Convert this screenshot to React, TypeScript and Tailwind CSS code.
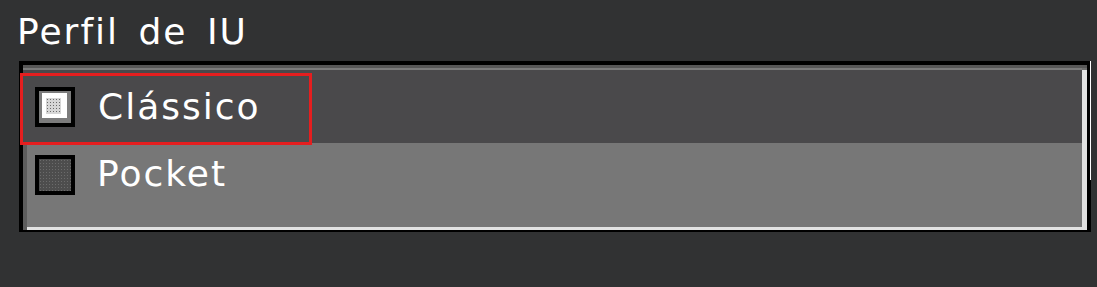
export default function App() {
  return (
    <div className="h-[287px] w-[1097px] overflow-hidden bg-[#313233] pt-[12px] font-['DejaVu_Sans',sans-serif] text-white">
      <div className="ml-[17px] text-[36px] leading-[40px] tracking-[2px] [word-spacing:6px]">
        Perfil de IU
      </div>

      {/* list box */}
      <div className="relative ml-[19px] mt-[9px] w-[1072px] border-b-2 border-l-4 border-r-4 border-t-4 border-black bg-black">
        <div className="h-[3px] bg-[#575757]" />
        <div className="flex h-[2px]">
          <div className="flex-1 bg-[#7b7b7b]" />
          <div className="w-[5px] bg-[#6e6e6e]" />
        </div>
        <div className="flex">
          <div className="flex flex-1 flex-col">
            <Row label="Clássico" checked selected />
            <Row label="Pocket" />
            <div className="h-[3px] border-l-4 border-[#5c5c5c] bg-[#e2e2e2]" />
          </div>
          <div className="w-[5px] bg-[#e2e2e2]" />
        </div>

        {/* scrollbar edge */}
        <div className="absolute right-[-4px] top-[-4px] h-[119px] w-[1px] bg-white" />
      </div>
    </div>
  );
}

function Row({
  label,
  checked,
  selected,
}: {
  label: string;
  checked?: boolean;
  selected?: boolean;
}) {
  if (selected) {
    return (
      <div className="relative flex h-[73px] items-start gap-[23px] bg-[#4a494b] pl-[12px] pt-[17px]">
        <Checkbox checked={checked} />
        <span className="text-[36px] leading-[40px] tracking-[2px]">{label}</span>
        <div className="absolute left-[-3px] top-[3px] h-[72px] w-[292px] border-[3px] border-[#e51e1f]" />
      </div>
    );
  }
  return (
    <div className="flex h-[84px] items-start gap-[22px] border-l-4 border-[#5c5c5c] bg-[#777777] pl-[8px] pt-[12px]">
      <Checkbox checked={checked} />
      <span className="-mt-[1px] text-[36px] leading-[40px] tracking-[2px]">{label}</span>
    </div>
  );
}

function Checkbox({ checked }: { checked?: boolean }) {
  if (checked) {
    return (
      <div className="h-[40px] w-[40px] shrink-0 border-4 border-black bg-[#7c7c7c]">
        <div className="ml-[3px] mt-[2px] h-[25px] w-[25px] bg-white pl-[4px] pt-[5px]">
          <div className="h-[16px] w-[15px] bg-[#d6d6d6] bg-[radial-gradient(#6a6a6a_0.8px,transparent_1px)] bg-[length:3px_3px]" />
        </div>
      </div>
    );
  }
  return (
    <div className="h-[40px] w-[40px] shrink-0 border-4 border-black bg-[#4d4d4d] bg-[radial-gradient(#6b6b6b_0.8px,transparent_1px)] bg-[length:3px_3px]" />
  );
}
